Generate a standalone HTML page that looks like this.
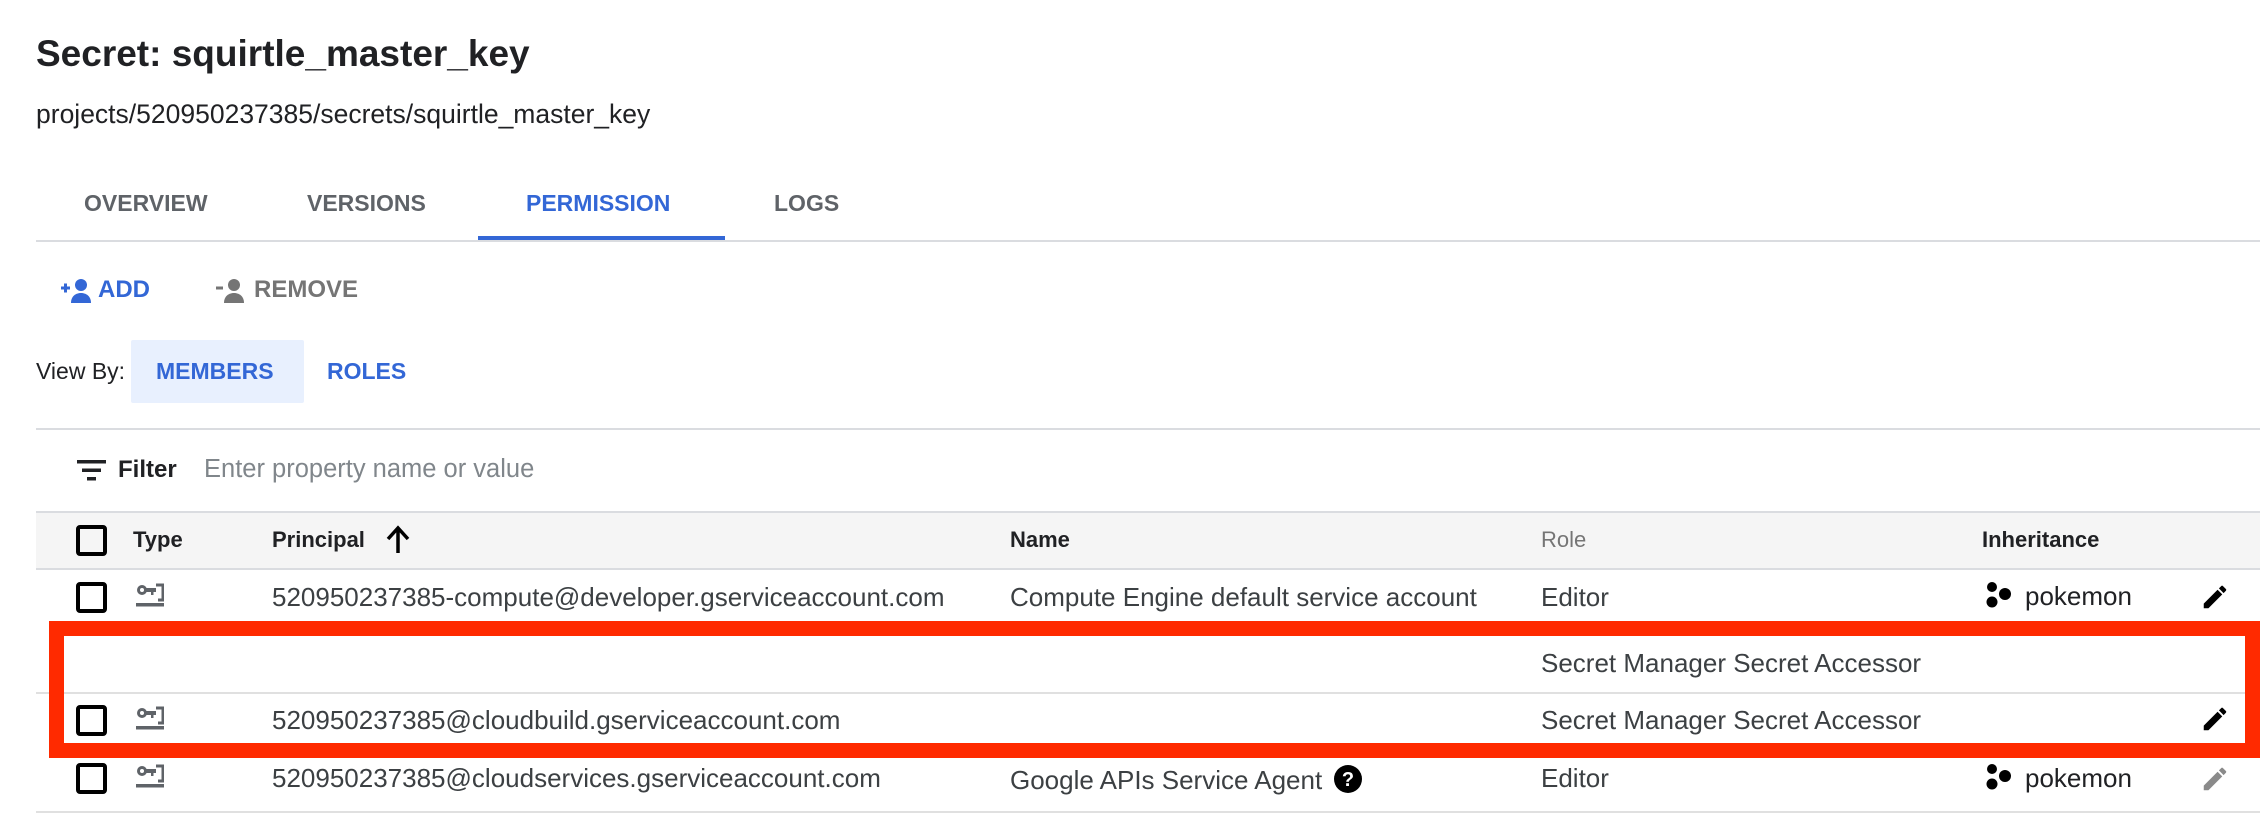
<!DOCTYPE html>
<html><head><meta charset="utf-8"><style>
*{margin:0;padding:0;box-sizing:border-box}
body{width:2260px;height:814px;background:#fff;position:relative;overflow:hidden;font-family:"Liberation Sans",Arial,sans-serif;color:#202124}
.a{position:absolute;white-space:nowrap;line-height:1}
.t{font-size:26px;color:#3c4043}
.h{font-size:22px;font-weight:bold;color:#202124}
.line{position:absolute;height:2px;background:#dadce0;left:36px;right:0}
.cb{position:absolute;left:76px;width:31px;height:31px;border:4px solid #000;border-radius:4px}
.tab{font-size:23px;font-weight:bold;color:#5f6368}
</style></head><body>
<div class="a" style="left:36px;top:35px;font-size:37px;font-weight:bold;color:#202124">Secret: squirtle_master_key</div>
<div class="a" style="left:36px;top:101px;font-size:26.5px;color:#202124">projects/520950237385/secrets/squirtle_master_key</div>

<div class="a tab" style="left:84px;top:192px">OVERVIEW</div>
<div class="a tab" style="left:307px;top:192px">VERSIONS</div>
<div class="a tab" style="left:526px;top:192px;color:#3367d6">PERMISSION</div>
<div class="a tab" style="left:774px;top:192px">LOGS</div>
<div class="line" style="top:240px"></div>
<div style="position:absolute;left:478px;top:236px;width:247px;height:4px;background:#3367d6"></div>

<svg style="position:absolute;left:61px;top:278px" width="36" height="26" viewBox="0 0 36 26"><path d="M0 10h9M4.5 5.5v9" stroke="#3367d6" stroke-width="3"/><circle cx="20" cy="7" r="6" fill="#3367d6"/><path d="M10 25c0-7 5-10 10-10s10 3 10 10z" fill="#3367d6"/></svg>
<div class="a" style="left:98px;top:278px;font-size:24px;font-weight:bold;color:#3367d6">ADD</div>
<svg style="position:absolute;left:216px;top:278px" width="36" height="26" viewBox="0 0 36 26"><path d="M0 10h7" stroke="#757575" stroke-width="3"/><circle cx="18" cy="7" r="6" fill="#757575"/><path d="M8 25c0-7 5-10 10-10s10 3 10 10z" fill="#757575"/></svg>
<div class="a" style="left:254px;top:278px;font-size:24px;font-weight:bold;color:#757575">REMOVE</div>

<div class="a" style="left:36px;top:360px;font-size:23px;color:#202124">View By:</div>
<div style="position:absolute;left:131px;top:340px;width:173px;height:63px;background:#e8f0fe;border-radius:2px"></div>
<div class="a" style="left:156px;top:360px;font-size:23px;font-weight:bold;color:#3367d6">MEMBERS</div>
<div class="a" style="left:327px;top:360px;font-size:23px;font-weight:bold;color:#3367d6">ROLES</div>
<div class="line" style="top:428px"></div>

<svg style="position:absolute;left:77px;top:460px" width="30" height="21"><rect x="0" y="0" width="29" height="3.5" fill="#202124"/><rect x="5" y="8.5" width="19" height="3.5" fill="#202124"/><rect x="10" y="17" width="9" height="3.5" fill="#202124"/></svg>
<div class="a" style="left:118px;top:458px;font-size:24px;font-weight:bold">Filter</div>
<div class="a" style="left:204px;top:457px;font-size:25.5px;color:#80868b">Enter property name or value</div>

<div style="position:absolute;left:36px;right:0;top:511px;height:59px;background:#f5f5f5;border-top:2px solid #dadce0;border-bottom:2px solid #dadce0"></div>
<div class="cb" style="top:525px"></div>
<div class="a h" style="left:133px;top:529px">Type</div>
<div class="a h" style="left:272px;top:529px">Principal</div>
<svg style="position:absolute;left:385px;top:525px" width="26" height="30"><path d="M13 28V4M3 14L13 3l10 11" stroke="#000" stroke-width="3.5" fill="none"/></svg>
<div class="a h" style="left:1010px;top:529px">Name</div>
<div class="a" style="left:1541px;top:529px;font-size:22px;color:#757575">Role</div>
<div class="a h" style="left:1982px;top:529px">Inheritance</div>

<div class="line" style="top:692px;background:#e0e0e0"></div>
<div class="line" style="top:811px;background:#e0e0e0"></div>

<!-- row 1 -->
<div class="cb" style="top:582px"></div>
<svg style="position:absolute;left:136px;top:583px" width="28" height="24"><circle cx="6" cy="7" r="5" fill="#5f6368"/><circle cx="6" cy="7" r="2" fill="#fff"/><rect x="10" y="5" width="10" height="4" fill="#5f6368"/><rect x="15" y="9" width="2.5" height="3" fill="#5f6368"/><path d="M20 2h7v15h-5" stroke="#5f6368" stroke-width="3" fill="none"/><rect x="0" y="20" width="28" height="3.5" fill="#5f6368"/></svg>
<div class="a t" style="left:272px;top:584px">520950237385-compute@developer.gserviceaccount.com</div>
<div class="a t" style="left:1010px;top:584px">Compute Engine default service account</div>
<div class="a t" style="left:1541px;top:584px">Editor</div>
<svg style="position:absolute;left:1986px;top:582px" width="27" height="26"><circle cx="6" cy="5" r="5" fill="#000"/><circle cx="19" cy="12" r="6" fill="#000"/><circle cx="6" cy="20" r="5.5" fill="#000"/></svg>
<div class="a" style="left:2025px;top:583px;font-size:26px;color:#202124">pokemon</div>
<svg style="position:absolute;left:2200px;top:582px" width="30" height="30" viewBox="0 0 24 24"><path d="M3 17.25V21h3.75L17.81 9.94l-3.75-3.75L3 17.25zM20.71 7.04a1 1 0 000-1.41l-2.34-2.34a1 1 0 00-1.41 0l-1.83 1.83 3.75 3.75 1.83-1.83z" fill="#000"/></svg>

<div style="position:absolute;left:49px;top:621px;width:2211px;height:137px;border:15px solid #ff2a00"></div>

<div class="a t" style="left:1541px;top:650px">Secret Manager Secret Accessor</div>
<div class="cb" style="top:705px"></div>
<svg style="position:absolute;left:136px;top:706px" width="28" height="24"><circle cx="6" cy="7" r="5" fill="#5f6368"/><circle cx="6" cy="7" r="2" fill="#fff"/><rect x="10" y="5" width="10" height="4" fill="#5f6368"/><rect x="15" y="9" width="2.5" height="3" fill="#5f6368"/><path d="M20 2h7v15h-5" stroke="#5f6368" stroke-width="3" fill="none"/><rect x="0" y="20" width="28" height="3.5" fill="#5f6368"/></svg>
<div class="a t" style="left:272px;top:707px">520950237385@cloudbuild.gserviceaccount.com</div>
<div class="a t" style="left:1541px;top:707px">Secret Manager Secret Accessor</div>
<svg style="position:absolute;left:2200px;top:704px" width="30" height="30" viewBox="0 0 24 24"><path d="M3 17.25V21h3.75L17.81 9.94l-3.75-3.75L3 17.25zM20.71 7.04a1 1 0 000-1.41l-2.34-2.34a1 1 0 00-1.41 0l-1.83 1.83 3.75 3.75 1.83-1.83z" fill="#000"/></svg>

<!-- row 4 -->
<div class="cb" style="top:763px"></div>
<svg style="position:absolute;left:136px;top:764px" width="28" height="24"><circle cx="6" cy="7" r="5" fill="#5f6368"/><circle cx="6" cy="7" r="2" fill="#fff"/><rect x="10" y="5" width="10" height="4" fill="#5f6368"/><rect x="15" y="9" width="2.5" height="3" fill="#5f6368"/><path d="M20 2h7v15h-5" stroke="#5f6368" stroke-width="3" fill="none"/><rect x="0" y="20" width="28" height="3.5" fill="#5f6368"/></svg>
<div class="a t" style="left:272px;top:765px">520950237385@cloudservices.gserviceaccount.com</div>
<div class="a t" style="left:1010px;top:767px">Google APIs Service Agent</div>
<svg style="position:absolute;left:1334px;top:765px" width="28" height="28" viewBox="0 0 28 28"><circle cx="14" cy="14" r="14" fill="#000"/><text x="14" y="21" text-anchor="middle" font-family="Liberation Sans" font-weight="bold" font-size="20" fill="#fff">?</text></svg>
<div class="a t" style="left:1541px;top:765px">Editor</div>
<svg style="position:absolute;left:1986px;top:764px" width="27" height="26"><circle cx="6" cy="5" r="5" fill="#000"/><circle cx="19" cy="12" r="6" fill="#000"/><circle cx="6" cy="20" r="5.5" fill="#000"/></svg>
<div class="a" style="left:2025px;top:765px;font-size:26px;color:#202124">pokemon</div>
<svg style="position:absolute;left:2200px;top:764px" width="30" height="30" viewBox="0 0 24 24"><path d="M3 17.25V21h3.75L17.81 9.94l-3.75-3.75L3 17.25zM20.71 7.04a1 1 0 000-1.41l-2.34-2.34a1 1 0 00-1.41 0l-1.83 1.83 3.75 3.75 1.83-1.83z" fill="#8a8a8a"/></svg>
</body></html>
